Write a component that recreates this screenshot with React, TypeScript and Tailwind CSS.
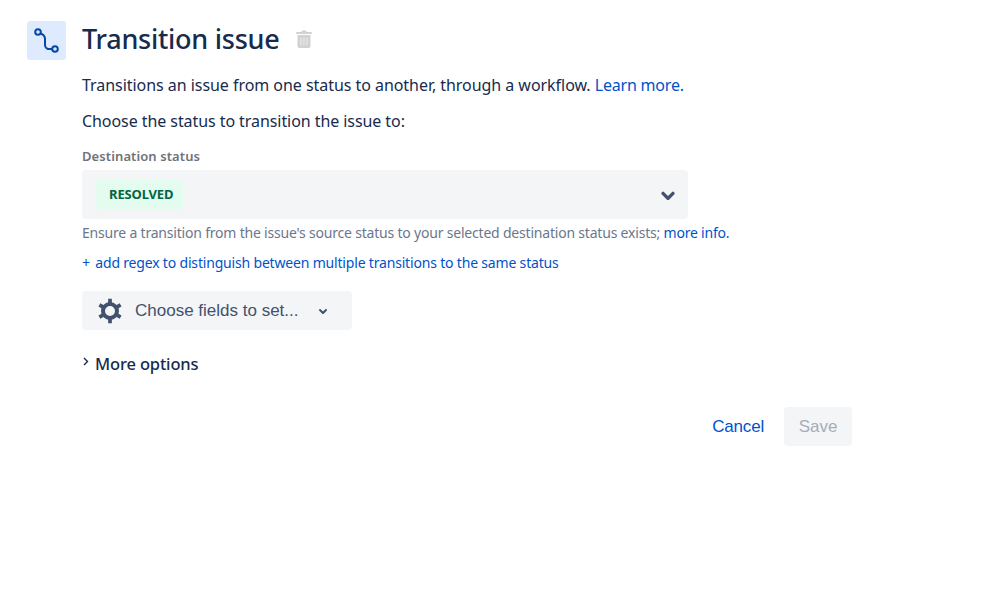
const sans = "font-['Noto_Sans',sans-serif]";

function Chevron({ className }: { className: string }) {
	return (
		<svg viewBox="0 0 24 24" className={className} fill="currentColor">
			<path d="M8.292 10.293a1.009 1.009 0 0 0 0 1.419l2.939 2.965c.218.215.5.322.779.322s.556-.107.769-.322l2.93-2.955a1.01 1.01 0 0 0 0-1.419.987.987 0 0 0-1.406 0l-2.298 2.317-2.307-2.327a.99.99 0 0 0-1.406 0z" />
		</svg>
	);
}

export default function App() {
	return (
		<div className={`${sans} min-h-[593px] bg-white pl-[27px] pt-[21px] flex items-start gap-[16px] text-[#172b4d]`}>
			<div className="w-[39px] h-[39px] rounded-[3px] bg-[#deebff] flex items-center justify-center shrink-0">
				<svg viewBox="0 0 39 39" className="w-[39px] h-[39px]" fill="none" stroke="#0747a6" strokeWidth="2">
					<circle cx="11" cy="11" r="2.8" />
					<circle cx="28" cy="28" r="2.8" />
					<path d="M13.500 12.500c3 1 4.500 2.500 4.500 5.500v6c0 3 2 4.500 7 4" />
				</svg>
			</div>
			<div className="w-[770px]">
				<div className="flex items-center gap-[16px] h-[36px]">
					<h1 className="text-[27px] leading-[36px] font-medium text-[#172b4d] tracking-[-0.25px]">Transition issue</h1>
					<svg viewBox="0 0 16 18" className="w-[16px] h-[18px]" fill="#d0d1d3">
						<path d="M5.500 1.500A1 1 0 0 1 6.500.5h3a1 1 0 0 1 1 1V2H15a.8.8 0 0 1 .8.8V4H.2V2.800A.8.8 0 0 1 1 2h4.500zM1.500 5h13v11a2 2 0 0 1-2 2h-9a2 2 0 0 1-2-2z" />
						<path d="M5 7.500v8M8 7.500v8M11 7.500v8" stroke="#eeeeee" strokeWidth="1" />
					</svg>
				</div>
				<p className="mt-[16px] text-[16px] leading-[24px] tracking-[-0.045px]">
					Transitions an issue from one status to another, through a workflow. <a className="text-[#0052cc] tracking-[-0.2px]">Learn more.</a>
				</p>
				<p className="mt-[12px] text-[16px] leading-[24px] tracking-[-0.07px]">Choose the status to transition the issue to:</p>
				<div className="mt-[15px] text-[13px] leading-[16px] font-semibold text-[#6f7378] tracking-[0.1px]">Destination status</div>
				<div className="mt-[6px] w-[606px] h-[49px] rounded-[4px] bg-[#f4f5f7] flex items-center justify-between pl-[14px]">
					<span className="h-[29px] pl-[13px] pt-[1px] w-[87px] flex items-center rounded-[3px] bg-[#e3fcef] text-[13px] font-bold text-[#006644] tracking-[-0.15px] whitespace-nowrap">RESOLVED</span>
					<Chevron className="w-[40px] h-[40px] text-[#42526e]" />
				</div>
				<p className="mt-[5px] text-[14px] leading-[18px] text-[#6b778c] tracking-[-0.2px]">
					Ensure a transition from the issue's source status to your selected destination status exists; <a className="text-[#0052cc]">more info.</a>
				</p>
				<a className="block mt-[12px] text-[14px] leading-[18px] text-[#0052cc] tracking-[-0.18px]">
					<span className="mr-[2px]">+</span> add regex to distinguish between multiple transitions to the same status
				</a>
				<button className="mt-[19px] w-[270px] h-[39px] rounded-[4px] bg-[#f4f5f7] flex items-center pl-[13px] font-['Liberation_Sans',sans-serif] text-[17px] text-[#42526e]">
					<svg viewBox="0 0 24 24" className="w-[30px] h-[30px] shrink-0" fill="none" stroke="#42526e">
						<circle cx="12" cy="12" r="5.600" strokeWidth="3.200" />
						<path strokeWidth="3" d="M12 2.200V7M12 21.800V17M3.510 7.100l4.160 2.400M20.490 16.900l-4.160-2.400M3.510 16.900l4.160-2.400M20.490 7.100l-4.160 2.400" />
					</svg>
					<span className="ml-[10px]">Choose fields to set...</span>
					<Chevron className="ml-[13px] w-[24px] h-[24px] text-[#42526e]" />
				</button>
				<div className="mt-[22px] flex items-start h-[24px]">
					<svg viewBox="0 0 8 10" className="w-[8px] h-[10px] mt-[5px]" fill="none" stroke="#172b4d" strokeWidth="1.400">
						<path d="M2 1l3.500 3.500L2 8" />
					</svg>
					<span className="ml-[5px] text-[16.500px] leading-[24px] font-medium tracking-[-0.15px]">More options</span>
				</div>
				<div className="mt-[31px] w-[770px] flex justify-end items-center font-['Liberation_Sans',sans-serif] text-[17px]">
					<a className="text-[#0052cc] tracking-[-0.2px]">Cancel</a>
					<button className="ml-[20px] w-[68px] h-[39px] rounded-[4px] bg-[#f4f5f7] text-[#a5adba]">Save</button>
				</div>
			</div>
		</div>
	);
}
